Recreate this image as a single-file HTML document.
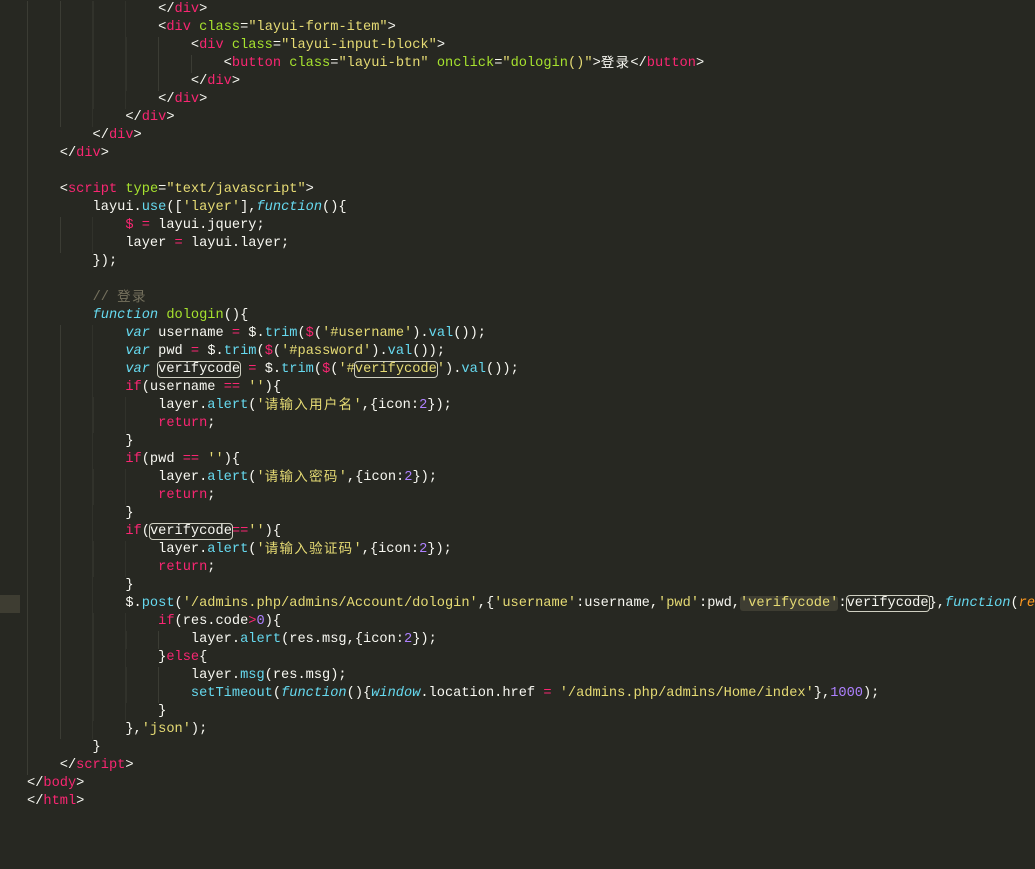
<!DOCTYPE html>
<html><head><meta charset="utf-8"><style>
html,body{margin:0;padding:0;background:#272822;width:1035px;height:869px;overflow:hidden}
#code{position:absolute;left:0;top:1px;width:1035px}
.l{position:relative;height:18px;line-height:18px;white-space:pre;font-family:"Liberation Mono","Noto Sans CJK SC",monospace;font-size:13.67px;color:#f8f8f2;padding-left:27px;overflow:hidden}
.l i.g{position:absolute;left:27px;top:0;height:18px;background:repeating-linear-gradient(to right,#3b3c34 0 1px,transparent 1px 32.8px)}
.l b{font-weight:normal}
.p{color:#f92672}.gr{color:#a6e22e}.y{color:#e6db74}.bl{color:#66d9ef}.it{color:#66d9ef;font-style:italic}
.cm{color:#75715e}.pu{color:#ae81ff}.o{color:#fd971f;font-style:italic}
.c{font-family:"Noto Sans CJK SC","WenQuanYi Zen Hei",sans-serif;letter-spacing:1.3px;display:inline-block;height:18px;line-height:18px;vertical-align:top;font-size:13.5px;position:relative;top:-3px}
.bx{outline:1px solid #cfcfc2;border-radius:3px}
.hl{background:#3e3d32;border-radius:3px}
.cur{position:absolute;left:0;top:595px;width:20px;height:18px;background:#3e3d32}
</style></head><body>
<div class="cur"></div>
<div id="code">
<div class="l"><i class="g" style="width:99px"></i>                &lt;/<b class="p">div</b>&gt;</div>
<div class="l"><i class="g" style="width:99px"></i>                &lt;<b class="p">div</b> <b class="gr">class</b>=<b class="y">"layui-form-item"</b>&gt;</div>
<div class="l"><i class="g" style="width:132px"></i>                    &lt;<b class="p">div</b> <b class="gr">class</b>=<b class="y">"layui-input-block"</b>&gt;</div>
<div class="l"><i class="g" style="width:165px"></i>                        &lt;<b class="p">button</b> <b class="gr">class</b>=<b class="y">"layui-btn"</b> <b class="gr">onclick</b>=<b class="y">"<b class="gr">dologin</b>()"</b>&gt;<span class="c">登录</span>&lt;/<b class="p">button</b>&gt;</div>
<div class="l"><i class="g" style="width:132px"></i>                    &lt;/<b class="p">div</b>&gt;</div>
<div class="l"><i class="g" style="width:99px"></i>                &lt;/<b class="p">div</b>&gt;</div>
<div class="l"><i class="g" style="width:66px"></i>            &lt;/<b class="p">div</b>&gt;</div>
<div class="l"><i class="g" style="width:33px"></i>        &lt;/<b class="p">div</b>&gt;</div>
<div class="l"><i class="g" style="width:1px"></i>    &lt;/<b class="p">div</b>&gt;</div>
<div class="l"><i class="g" style="width:1px"></i></div>
<div class="l"><i class="g" style="width:1px"></i>    &lt;<b class="p">script</b> <b class="gr">type</b>=<b class="y">"text/javascript"</b>&gt;</div>
<div class="l"><i class="g" style="width:33px"></i>        layui.<b class="bl">use</b>([<b class="y">'layer'</b>],<b class="it">function</b>(){</div>
<div class="l"><i class="g" style="width:66px"></i>            <b class="p">$</b> <b class="p">=</b> layui.jquery;</div>
<div class="l"><i class="g" style="width:66px"></i>            layer <b class="p">=</b> layui.layer;</div>
<div class="l"><i class="g" style="width:33px"></i>        });</div>
<div class="l"><i class="g" style="width:33px"></i></div>
<div class="l"><i class="g" style="width:33px"></i>        <b class="cm">// <span class="c">登录</span></b></div>
<div class="l"><i class="g" style="width:33px"></i>        <b class="it">function</b> <b class="gr">dologin</b>(){</div>
<div class="l"><i class="g" style="width:66px"></i>            <b class="it">var</b> username <b class="p">=</b> $.<b class="bl">trim</b>(<b class="p">$</b>(<b class="y">'#username'</b>).<b class="bl">val</b>());</div>
<div class="l"><i class="g" style="width:66px"></i>            <b class="it">var</b> pwd <b class="p">=</b> $.<b class="bl">trim</b>(<b class="p">$</b>(<b class="y">'#password'</b>).<b class="bl">val</b>());</div>
<div class="l"><i class="g" style="width:66px"></i>            <b class="it">var</b> <span class="bx">verifycode</span> <b class="p">=</b> $.<b class="bl">trim</b>(<b class="p">$</b>(<b class="y">'#<span class="bx">verifycode</span>'</b>).<b class="bl">val</b>());</div>
<div class="l"><i class="g" style="width:66px"></i>            <b class="p">if</b>(username <b class="p">==</b> <b class="y">''</b>){</div>
<div class="l"><i class="g" style="width:99px"></i>                layer.<b class="bl">alert</b>(<b class="y">'<span class="c">请输入用户名</span>'</b>,{icon:<b class="pu">2</b>});</div>
<div class="l"><i class="g" style="width:99px"></i>                <b class="p">return</b>;</div>
<div class="l"><i class="g" style="width:66px"></i>            }</div>
<div class="l"><i class="g" style="width:66px"></i>            <b class="p">if</b>(pwd <b class="p">==</b> <b class="y">''</b>){</div>
<div class="l"><i class="g" style="width:99px"></i>                layer.<b class="bl">alert</b>(<b class="y">'<span class="c">请输入密码</span>'</b>,{icon:<b class="pu">2</b>});</div>
<div class="l"><i class="g" style="width:99px"></i>                <b class="p">return</b>;</div>
<div class="l"><i class="g" style="width:66px"></i>            }</div>
<div class="l"><i class="g" style="width:66px"></i>            <b class="p">if</b>(<span class="bx">verifycode</span><b class="p">==</b><b class="y">''</b>){</div>
<div class="l"><i class="g" style="width:99px"></i>                layer.<b class="bl">alert</b>(<b class="y">'<span class="c">请输入验证码</span>'</b>,{icon:<b class="pu">2</b>});</div>
<div class="l"><i class="g" style="width:99px"></i>                <b class="p">return</b>;</div>
<div class="l"><i class="g" style="width:66px"></i>            }</div>
<div class="l"><i class="g" style="width:66px"></i>            $.<b class="bl">post</b>(<b class="y">'/admins.php/admins/Account/dologin'</b>,{<b class="y">'username'</b>:username,<b class="y">'pwd'</b>:pwd,<b class="y hl">'verifycode'</b>:<span class="bx">verifycode</span>},<b class="it">function</b>(<b class="o">res</b>){</div>
<div class="l"><i class="g" style="width:99px"></i>                <b class="p">if</b>(res.code<b class="p">&gt;</b><b class="pu">0</b>){</div>
<div class="l"><i class="g" style="width:132px"></i>                    layer.<b class="bl">alert</b>(res.msg,{icon:<b class="pu">2</b>});</div>
<div class="l"><i class="g" style="width:99px"></i>                }<b class="p">else</b>{</div>
<div class="l"><i class="g" style="width:132px"></i>                    layer.<b class="bl">msg</b>(res.msg);</div>
<div class="l"><i class="g" style="width:132px"></i>                    <b class="bl">setTimeout</b>(<b class="it">function</b>(){<b class="it">window</b>.location.href <b class="p">=</b> <b class="y">'/admins.php/admins/Home/index'</b>},<b class="pu">1000</b>);</div>
<div class="l"><i class="g" style="width:99px"></i>                }</div>
<div class="l"><i class="g" style="width:66px"></i>            },<b class="y">'json'</b>);</div>
<div class="l"><i class="g" style="width:33px"></i>        }</div>
<div class="l"><i class="g" style="width:1px"></i>    &lt;/<b class="p">script</b>&gt;</div>
<div class="l">&lt;/<b class="p">body</b>&gt;</div>
<div class="l">&lt;/<b class="p">html</b>&gt;</div>
</div>
</body></html>
